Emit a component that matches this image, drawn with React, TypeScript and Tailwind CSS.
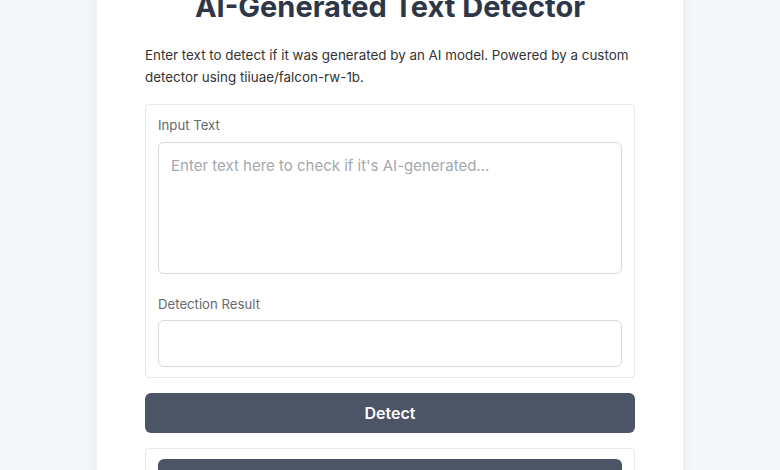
export default function App() {
	return (
		<div
			className="h-[470px] overflow-hidden bg-[#f4f6fa]"
			style={{ fontFamily: "Inter, 'Noto Sans', sans-serif" }}
		>
			<div className="mx-auto -mt-[11px] w-[586px] bg-white px-12 pb-10 shadow-[0_0_12px_rgba(0,0,0,0.06)]">
				<h1 className="text-center text-[29px] leading-9 font-bold text-[#2d3748]">
					AI-Generated Text Detector
				</h1>
				<p className="mt-[19px] text-[13.4px] leading-[22px] text-[#333]">
					Enter text to detect if it was generated by an AI model. Powered by a
					custom detector using tiiuae/falcon-rw-1b.
				</p>

				<div className="mt-4 rounded border border-[#e8e8ea] px-3 pt-[10px] pb-[10px]">
					<label className="block text-[13.2px] leading-5 text-[#666a70]">
						Input Text
					</label>
					<textarea
						className="mt-[7px] block h-[132px] w-full resize-none rounded-md border border-[#d8d9dc] px-3 py-[12px] text-[15px] text-[#333] placeholder:text-[#a5a8ad] focus:outline-none"
						placeholder="Enter text here to check if it's AI-generated..."
					/>

					<label className="mt-5 block text-[13.2px] leading-5 text-[#666a70]">
						Detection Result
					</label>
					<div className="mt-[6px] h-[47px] w-full rounded-md border border-[#d8d9dc]" />
				</div>

				<button className="mt-[15px] flex h-10 w-full items-center justify-center rounded-md bg-[#4b5565] text-base font-semibold text-white">
					Detect
				</button>

				<div className="mt-[15px] rounded border border-[#e8e8ea] px-3 pt-[10px] pb-3">
					<div className="h-10 w-full rounded-md bg-[#4b5565]" />
				</div>
			</div>
		</div>
	);
}
